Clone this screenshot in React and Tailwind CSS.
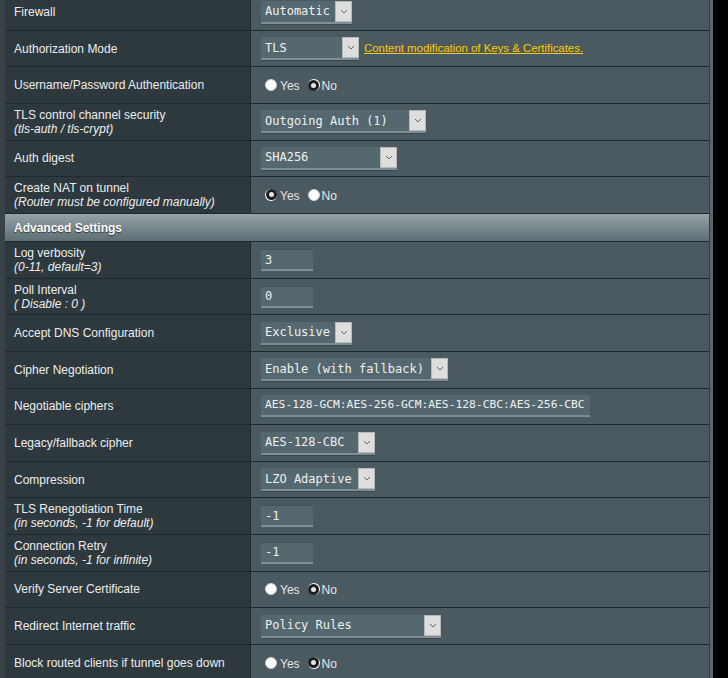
import React from "react";

const sans = { fontFamily: '"Liberation Sans", Arial, sans-serif' };
const mono = { fontFamily: '"DejaVu Sans Mono", monospace' };

function Select({ value, width }) {
    return (
        <div
            className="flex h-[23px] items-stretch bg-[#55686f] border-b-2 border-[#7d8e94] shadow-[0_1px_0_#3b474c]"
            style={{ width }}
        >
            <div className="flex-1 flex items-center pl-[4px] text-[12px] text-[#f0f0f0] whitespace-nowrap overflow-hidden" style={mono}>
                {value}
            </div>
            <div className="w-[17px] bg-[#dedede] border border-[#b8b8b8] flex items-center justify-center">
                <svg width="8" height="5" viewBox="0 0 8 5">
                    <path d="M1 1 L4 4 L7 1" stroke="#666" strokeWidth="1" fill="none" />
                </svg>
            </div>
        </div>
    );
}

function TextInput({ value, width }) {
    return (
        <div
            className="flex h-[22px] items-center bg-[#55686f] border-b-2 border-[#7d8e94] border-t border-t-[#42525a] pl-[4px] text-[12px] text-[#f0f0f0] whitespace-nowrap"
            style={{ ...mono, width }}
        >
            {value}
        </div>
    );
}

function Radio({ checked }) {
    if (checked) {
        return (
            <span className="flex w-[12px] h-[12px] rounded-full bg-white items-center justify-center">
                <span className="block w-[11px] h-[11px] rounded-full border-[3px] border-[#1e1e1e] bg-[#e4e4e4]"></span>
            </span>
        );
    }
    return <span className="block w-[12px] h-[12px] rounded-full bg-white border border-[#cfcfcf]"></span>;
}

function YesNo({ yes }) {
    return (
        <div className="flex items-center text-[12px] text-[#e6e6e6]" style={sans}>
            <span className="ml-[4px]"><Radio checked={yes} /></span>
            <span className="ml-[3px] mt-[2px]">Yes</span>
            <span className="ml-[8px]"><Radio checked={!yes} /></span>
            <span className="ml-[2px] mt-[2px]">No</span>
        </div>
    );
}

function Row({ label, sub, children }) {
    return (
        <div className="flex h-[36.6px] border-b border-[#1f282c]">
            <div className="w-[246px] bg-[#2e393e] border-r border-[#1f282c] flex flex-col justify-center pl-[9px] text-[12px] text-[#ededed] leading-[14px]" style={sans}>
                <div>{label}</div>
                {sub && <div className="italic">{sub}</div>}
            </div>
            <div className="flex-1 bg-[#4b5a60] flex items-center pl-[10px]">{children}</div>
        </div>
    );
}

const topRows = [
    { label: "Firewall", el: <Select value="Automatic" width={91} /> },
    {
        label: "Authorization Mode",
        el: (
            <div className="flex items-center">
                <Select value="TLS" width={98} />
                <a className="ml-[5px] text-[11.4px] text-[#ffcc00] underline" style={sans}>
                    Content modification of Keys &amp; Certificates.
                </a>
            </div>
        ),
    },
    { label: "Username/Password Authentication", el: <YesNo yes={false} /> },
    { label: "TLS control channel security", sub: "(tls-auth / tls-crypt)", el: <Select value="Outgoing Auth (1)" width={165} /> },
    { label: "Auth digest", el: <Select value="SHA256" width={136} /> },
    { label: "Create NAT on tunnel", sub: "(Router must be configured manually)", el: <YesNo yes={true} /> },
];

const advRows = [
    { label: "Log verbosity", sub: "(0-11, default=3)", el: <TextInput value="3" width={52} /> },
    { label: "Poll Interval", sub: "( Disable : 0 )", el: <TextInput value="0" width={52} /> },
    { label: "Accept DNS Configuration", el: <Select value="Exclusive" width={91} /> },
    { label: "Cipher Negotiation", el: <Select value="Enable (with fallback)" width={187} /> },
    {
        label: "Negotiable ciphers",
        el: (
            <div
                className="flex h-[22px] w-[329px] items-center bg-[#55686f] border-b-2 border-[#7d8e94] pl-[4px] text-[11.3px] text-[#f0f0f0] whitespace-nowrap"
                style={mono}
            >
                AES-128-GCM:AES-256-GCM:AES-128-CBC:AES-256-CBC
            </div>
        ),
    },
    { label: "Legacy/fallback cipher", el: <Select value="AES-128-CBC" width={114} /> },
    { label: "Compression", el: <Select value="LZO Adaptive" width={114} /> },
    { label: "TLS Renegotiation Time", sub: "(in seconds, -1 for default)", el: <TextInput value="-1" width={52} /> },
    { label: "Connection Retry", sub: "(in seconds, -1 for infinite)", el: <TextInput value="-1" width={52} /> },
    { label: "Verify Server Certificate", el: <YesNo yes={false} /> },
    { label: "Redirect Internet traffic", el: <Select value="Policy Rules" width={180} /> },
    { label: "Block routed clients if tunnel goes down", el: <YesNo yes={false} /> },
];

export default function App() {
    return (
        <div className="w-[728px] h-[678px] overflow-hidden bg-black flex">
            <div className="w-[5px] bg-[#394247]"></div>
            <div className="w-[704px] mt-[-5.8px]">
                {topRows.map((r, i) => (
                    <Row key={i} label={r.label} sub={r.sub}>{r.el}</Row>
                ))}
                <div
                    className="h-[28.5px] flex items-center pl-[9px] text-[12px] font-bold text-white bg-gradient-to-b from-[#96a3a9] to-[#5e6e74] border-b border-[#1f282c] [text-shadow:0_1px_1px_#333]"
                    style={sans}
                >
                    Advanced Settings
                </div>
                {advRows.map((r, i) => (
                    <Row key={i} label={r.label} sub={r.sub}>{r.el}</Row>
                ))}
            </div>
            <div className="w-[1px] bg-[#333d41]"></div>
            <div className="w-[3px] bg-[#5c666a]"></div>
        </div>
    );
}
